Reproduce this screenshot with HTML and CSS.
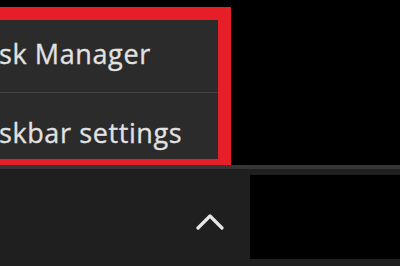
FILE: index.html
```html
<!DOCTYPE html>
<html>
<head>
<meta charset="utf-8">
<link rel="stylesheet" href="styles.css">
</head>
<body>
<div class="screen">
  <div class="menu-area">
    <div class="menu">
      <div class="item first"><span class="label">sk Manager</span></div>
      <div class="sep"></div>
      <div class="item second"><span class="label">skbar settings</span></div>
    </div>
  </div>
  <div class="edge"></div>
  <div class="taskbar">
    <div class="tray">
      <svg class="chevron" width="28" height="18" viewBox="0 0 28 18">
        <polyline points="2,15 14,3 26,15" fill="none" stroke="#e6e6e6" stroke-width="3.2" stroke-linecap="round" stroke-linejoin="round"/>
      </svg>
    </div>
    <div class="blackbox"></div>
  </div>
</div>
</body>
</html>
```
FILE: styles.css
```css
html, body {
  margin: 0;
  padding: 0;
  background: #000;
}
.screen {
  width: 400px;
  height: 266px;
  display: flex;
  flex-direction: column;
  overflow: hidden;
  font-family: "Open Sans", "Noto Sans", sans-serif;
}
.menu-area {
  padding-top: 7px;
  height: 165px;
  box-sizing: border-box;
}
.menu {
  width: 231px;
  box-sizing: border-box;
  border: 13px solid #e61e28;
  border-left: none;
  background: #2b2b2b;
  display: flex;
  flex-direction: column;
}
.item {
  color: #e2e2e2;
  font-size: 27px;
  font-weight: 400;
  letter-spacing: 0.6px;
  white-space: nowrap;
  overflow: hidden;
  line-height: 1;
  -webkit-text-stroke: 0.3px #e2e2e2;
}
.item.first {
  height: 72px;
  padding-top: 20px;
  box-sizing: border-box;
}
.item.second {
  height: 66px;
  padding-top: 26px;
  box-sizing: border-box;
}
.label {
  display: block;
  margin-left: -1px;
}
.sep {
  height: 1px;
  background: #414141;
}
.edge {
  height: 4px;
  background: #363636;
}
.taskbar {
  flex: 1;
  background: #1f1f1f;
  display: flex;
  padding-top: 6px;
  padding-bottom: 7px;
}
.tray {
  width: 250px;
  display: flex;
  align-items: center;
  justify-content: flex-end;
  padding-right: 26px;
  box-sizing: border-box;
  padding-top: 10px;
}
.chevron {
  display: block;
}
.blackbox {
  flex: 1;
  background: #000;
}
```
